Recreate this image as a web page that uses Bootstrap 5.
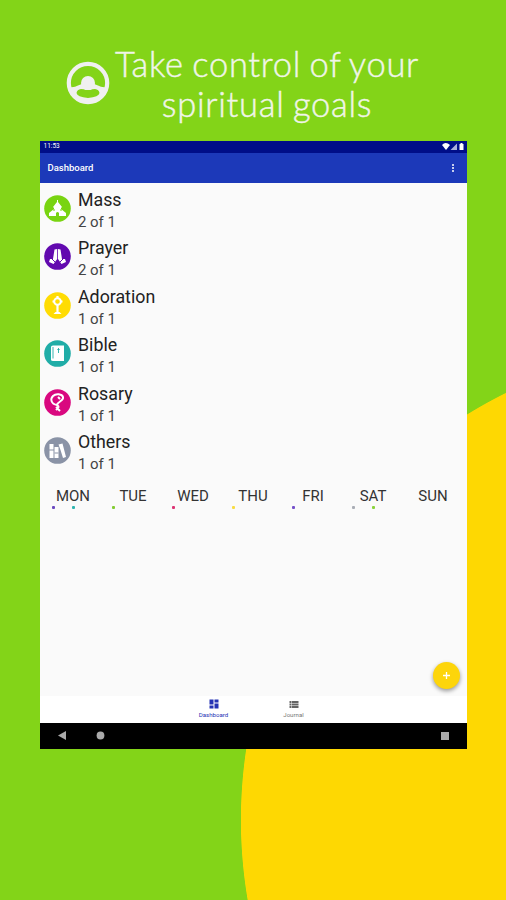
<!DOCTYPE html>
<html lang="en">
<head>
<meta charset="utf-8">
<meta name="viewport" content="width=device-width, initial-scale=1">
<title>Dashboard</title>
<link href="https://cdn.jsdelivr.net/npm/bootstrap@5.3.0/dist/css/bootstrap.min.css" rel="stylesheet">
<style>
body{background:#83d418;font-family:Roboto,"Liberation Sans",sans-serif;color:#2b2b2b}
.stage{width:506px;height:900px;background:radial-gradient(circle 477px at 717.5px 820px,#fed802 476.2px,#83d418 477px)}
.promo{height:141px;padding:43.5px 0 0 66px}
.promo svg{margin-top:17.5px}
.promo h1{font:300 34.5px/40.5px Lato,sans-serif;color:#f0f5e8;width:306px;margin-left:4px;letter-spacing:.7px;word-spacing:-1.5px;white-space:nowrap;-webkit-text-stroke:.45px #f0f5e8}
.device{width:427px;height:607.5px;margin-left:40px;background:#fafafa}
.status{height:11.5px;background:#000e88;font-size:6.5px;line-height:11.5px;padding:0 3px 0 3.5px}
.appbar{height:30px;background:#1c39b9;font-size:9.5px;line-height:1;padding:0 12.5px 0 7.5px}
.goals{padding:6.3px 0 0 3.5px}
.goal{height:48.5px}
.disc{margin-right:7.5px;margin-top:6px}
.goal-name{font-size:17.8px;line-height:22px;color:#222}
.goal-count{font-size:15px;line-height:22px;color:#444;letter-spacing:-.05px}
.week{padding:6.5px 4px 0 3px}
.day{font-size:15px;line-height:20px;color:#333}
.dots{height:4px}
.dots span{width:20px}
.dots i{display:block;width:3px;height:3px;border-radius:1px;margin:0 auto}
.fab-row{padding:0 7px 7px 0}
.fab{width:27px;height:27px;background:#fdd50b;box-shadow:0 2px 4px rgba(0,0,0,.4)}
.tabs{height:26.5px;background:#fff;font-size:6.1px;line-height:6px}
.tabs>div{width:80px;padding-top:3px}
.tabs span{margin-top:3px}
.t-on{color:#2433b4}.t-off{color:#777}
.sysbar{height:26px;background:#000;padding:0 18px}
</style>
<script src="https://cdn.jsdelivr.net/npm/bootstrap@5.3.0/dist/js/bootstrap.bundle.min.js"></script>
</head>
<body>
<main class="stage overflow-hidden">
<header class="promo d-flex align-items-start">
<svg class="flex-shrink-0" width="44" height="44" viewBox="0 0 44 44"><circle cx="22" cy="22" r="19.200" fill="none" stroke="#f0f0f0" stroke-width="4.200"/><circle cx="22" cy="22" r="7" fill="#f0f0f0"/><path fill-rule="evenodd" d="M3 26Q8 27 12 24.500Q16 22 22 22Q28 22 32 24.500Q36 27 41 26Q37 40 22 42Q7 40 3 26ZM10.500 32Q11 36 22 37Q33 36 33.500 32Q33 28.500 29 28Q26 28 24.500 29H19.500Q18 28 15 28Q11 28.500 10.500 32Z" fill="#f0f0f0"/></svg>
<h1 class="mb-0 text-center">Take control of your<br>spiritual goals</h1>
</header>
<section class="device d-flex flex-column">
<div class="status d-flex justify-content-between text-white"><span>11:53</span>
<svg width="22" height="11" viewBox="0 0 22 11" fill="#fff"><path d="M0 4Q3.500 0 8 4L4 9Z"/><path d="M8.500 9L15 2.500V9Z" fill="#aab0dc"/><path d="M17.500 3h1V2h2v1h1v6h-4z"/></svg></div>
<div class="appbar d-flex align-items-center justify-content-between text-white fw-medium"><span>Dashboard</span>
<svg width="4" height="10" fill="#fff"><circle cx="2" cy="2" r="1"/><circle cx="2" cy="5" r="1"/><circle cx="2" cy="8" r="1"/></svg></div>
<div class="goals">
<div class="goal d-flex"><svg class="disc" width="27" height="27" viewBox="0 0 27 27"><circle cx="13.500" cy="13.500" r="13.300" fill="#79d411"/><path fill="#fff" d="M13 5h1v2l4 5-1 1v1l5 4v3h-7v-3q-1.500-2-3 0v3H5v-3l5-4v-1l-1-1 4-5z"/><path d="M9 15h2m5 0h2" stroke="#79d411"/></svg><div><div class="goal-name">Mass</div><div class="goal-count">2 of 1</div></div></div>
<div class="goal d-flex"><svg class="disc" width="27" height="27" viewBox="0 0 27 27"><circle cx="13.500" cy="13.500" r="13.300" fill="#6209af"/><path fill="#fff" d="M10.500 6.500l2.700-.500V16L9.500 21 5 19l1-3h3zM14 6l2.500.500 1.500 9.500h3l1 3-4.500 2-3.500-5z"/><path d="M8 16l3 3m8-3l-3 3" stroke="#6209af"/></svg><div><div class="goal-name">Prayer</div><div class="goal-count">2 of 1</div></div></div>
<div class="goal d-flex"><svg class="disc" width="27" height="27" viewBox="0 0 27 27"><circle cx="13.500" cy="13.500" r="13.300" fill="#ffdc03"/><path d="M13.500 4v3m-5 2.500h2m6 0h2M13.500 13v8" stroke="#fff" stroke-width="2.200"/><circle cx="13.500" cy="9.500" r="3.300" fill="none" stroke="#fff" stroke-width="2"/><path d="M9.500 22l2-2h4l2 2z" fill="#fff"/></svg><div><div class="goal-name">Adoration</div><div class="goal-count">1 of 1</div></div></div>
<div class="goal d-flex"><svg class="disc" width="27" height="27" viewBox="0 0 27 27"><circle cx="13.500" cy="13.500" r="13.300" fill="#20ada7"/><path d="M7 7q0-1.500 2-1.500h11V21H9q-2 0-2-1.500z" fill="#fff"/><path d="M9 7v11.500M14.500 8v5m-1.200-3.500h2.400" stroke="#20ada7" stroke-width=".9"/></svg><div><div class="goal-name">Bible</div><div class="goal-count">1 of 1</div></div></div>
<div class="goal d-flex"><svg class="disc" width="27" height="27" viewBox="0 0 27 27"><circle cx="13.500" cy="13.500" r="13.300" fill="#d9087f"/><path d="M13 16C7 15 6 10 9 7c3-3 9-2 10 1 1 4-5 4-6 8l2 2m-3 0l4 4m-4-1l3-3M14 8l2 2" fill="none" stroke="#fff" stroke-width="2"/></svg><div><div class="goal-name">Rosary</div><div class="goal-count">1 of 1</div></div></div>
<div class="goal d-flex"><svg class="disc" width="27" height="27" viewBox="0 0 27 27"><circle cx="13.500" cy="13.500" r="13.300" fill="#8a93a6"/><path d="M5.500 7h4v14h-4zM10.500 10h4v11h-4zM14.500 7.500l4-1L22 20l-3 1-2.500-8z" fill="#fff"/><path d="M5 13h5M10.500 16h4" stroke="#8a93a6"/></svg><div><div class="goal-name">Others</div><div class="goal-count">1 of 1</div></div></div>
</div>
<div class="week row g-0 text-center">
<div class="col"><div class="day">MON</div><div class="dots d-flex"><span><i style="background:#6a49c0"></i></span><span><i style="background:#2eb5b0"></i></span></div></div>
<div class="col"><div class="day">TUE</div><div class="dots d-flex"><span><i style="background:#83cc32"></i></span></div></div>
<div class="col"><div class="day">WED</div><div class="dots d-flex"><span><i style="background:#dc3474"></i></span></div></div>
<div class="col"><div class="day">THU</div><div class="dots d-flex"><span><i style="background:#f8dc43"></i></span></div></div>
<div class="col"><div class="day">FRI</div><div class="dots d-flex"><span><i style="background:#7550ca"></i></span></div></div>
<div class="col"><div class="day">SAT</div><div class="dots d-flex"><span><i style="background:#a9adb5"></i></span><span><i style="background:#8ad33c"></i></span></div></div>
<div class="col"><div class="day">SUN</div></div>
</div>
<div class="fab-row d-flex justify-content-end mt-auto"><div class="fab rounded-circle d-flex align-items-center justify-content-center"><svg width="9" height="9"><path d="M4.500 1v7M1 4.500h7" stroke="#fff" stroke-width="1.300"/></svg></div></div>
<nav class="tabs d-flex justify-content-center text-center">
<div class="t-on d-flex flex-column align-items-center"><svg width="10" height="10" viewBox="0 0 10 10" fill="#2433b4"><path d="M.500.500h4v5h-4zM5.500.500h4v3h-4zM.500 6.500h4v3h-4zM5.500 4.500h4v5h-4z"/></svg><span>Dashboard</span></div>
<div class="t-off d-flex flex-column align-items-center"><svg width="10" height="10" viewBox="0 0 10 10" fill="#666"><path d="M.500 2h1.500v2H.500zM2.500 2h7v2h-7zM.500 4.500h1.500v2H.500zM2.500 4.500h7v2h-7zM.500 7h1.500v2H.500zM2.500 7h7v2h-7z"/></svg><span>Journal</span></div>
</nav>
<div class="sysbar d-flex align-items-center">
<svg width="8" height="9"><path d="M0 4.500L8 0V9Z" fill="#aaa"/></svg>
<svg class="ms-4 me-auto" width="16" height="9"><circle cx="10.500" cy="4.500" r="3.900" fill="#aaa"/></svg>
<svg width="8" height="8"><rect width="8" height="8" fill="#aaa"/></svg>
</div>
</section>
</main>
</body>
</html>
